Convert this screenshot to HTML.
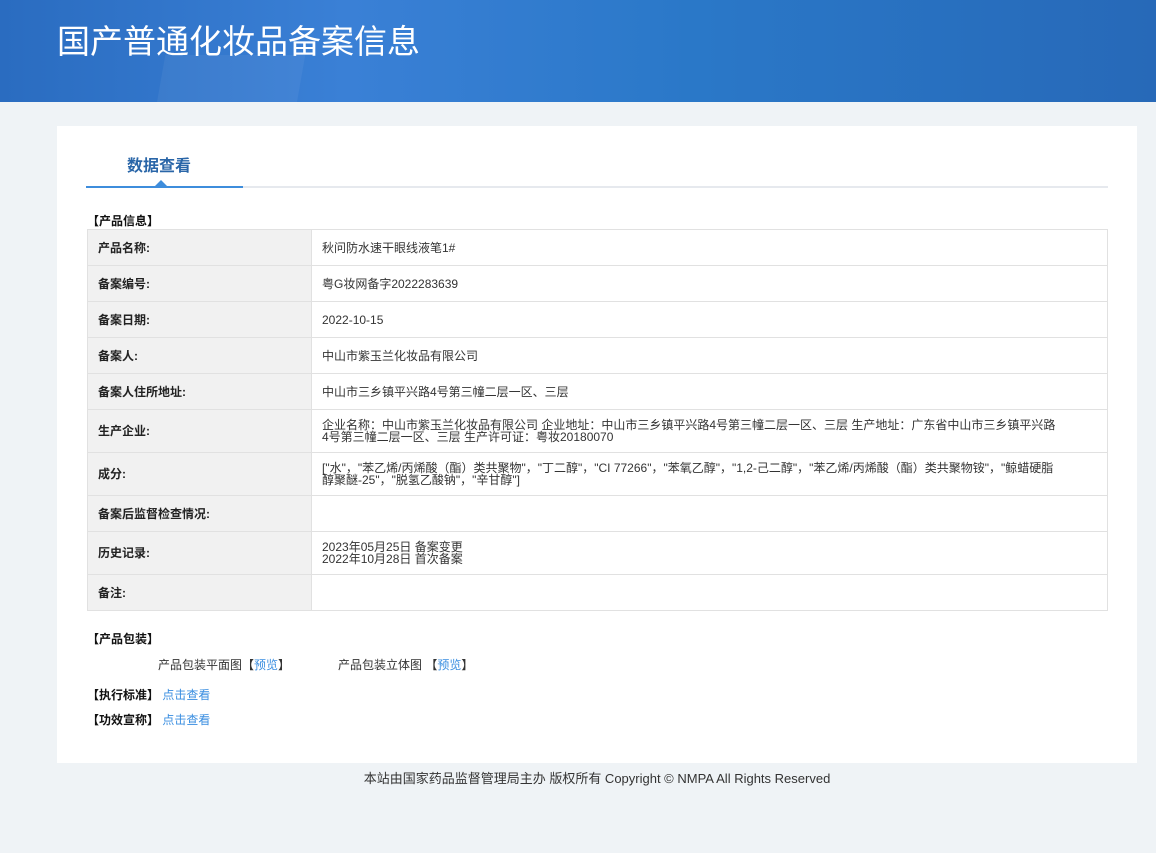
<!DOCTYPE html>
<html><head><meta charset="utf-8"><style>
*{margin:0;padding:0;box-sizing:border-box}
body{width:1156px;height:853px;background:#eff3f6;font-family:"Liberation Sans","Noto Sans CJK SC",sans-serif;font-size:12px;color:#333;position:relative;overflow:hidden}
.hd{position:absolute;left:0;top:0;width:1156px;height:102px;background:linear-gradient(90deg,#2a6cc0 0%,#3a80d6 30%,#2a78c8 60%,#2769b8 100%);overflow:hidden}
.hd h1{position:absolute;left:57px;top:15px;font-size:33px;font-weight:normal;color:#fff;font-family:"Noto Sans CJK SC",sans-serif}
.card{position:absolute;left:57px;top:126px;width:1080px;height:637px;background:#fff}
.tab{position:absolute;left:70px;top:26px;font-size:16px;font-weight:bold;color:#2a66a8;font-family:"Noto Sans CJK SC",sans-serif}
.line{position:absolute;left:29px;top:60px;width:1022px;height:2px;background:#e6e9ee}
.line2{position:absolute;left:29px;top:60px;width:157px;height:2px;background:#3e8ddc}
.tri{position:absolute;left:98px;top:54px;width:0;height:0;border-left:6px solid transparent;border-right:6px solid transparent;border-bottom:6px solid #3e8ddc}
.sec{position:absolute;font-weight:bold;color:#111;font-size:12px}
table{position:absolute;left:30px;top:103px;width:1021px;border-collapse:collapse;border:1px solid #9db8dc}
td{border:1px solid #e1e1e1;font-size:12px;vertical-align:middle;line-height:12px}
td.l{width:224px;background:#f1f1f1;font-weight:bold;padding-left:10px;color:#222}
td.v{padding-left:10px;color:#333}
a{color:#3a8ee0;text-decoration:none}
.ft{position:absolute;top:768px;left:0;width:1194px;text-align:center;font-size:13px;color:#333}
</style></head><body>
<div class="hd"><div style="position:absolute;left:160px;top:55px;width:140px;height:60px;background:rgba(255,255,255,0.05);transform:skewX(-10deg)"></div><h1>国产普通化妆品备案信息</h1></div>
<div class="card">
<div class="tab">数据查看</div>
<div class="line"></div><div class="line2"></div><div class="tri"></div>
<div class="sec" style="left:30px;top:86px">【产品信息】</div>
<table>
<tr style="height:36px"><td class="l">产品名称:</td><td class="v">秋问防水速干眼线液笔1#</td></tr>
<tr style="height:36px"><td class="l">备案编号:</td><td class="v">粤G妆网备字2022283639</td></tr>
<tr style="height:36px"><td class="l">备案日期:</td><td class="v">2022-10-15</td></tr>
<tr style="height:36px"><td class="l">备案人:</td><td class="v">中山市紫玉兰化妆品有限公司</td></tr>
<tr style="height:36px"><td class="l">备案人住所地址:</td><td class="v">中山市三乡镇平兴路4号第三幢二层一区、三层</td></tr>
<tr style="height:43px"><td class="l">生产企业:</td><td class="v" style="padding-right:50px">企业名称：中山市紫玉兰化妆品有限公司 企业地址：中山市三乡镇平兴路4号第三幢二层一区、三层 生产地址：广东省中山市三乡镇平兴路4号第三幢二层一区、三层 生产许可证：粤妆20180070</td></tr>
<tr style="height:43px"><td class="l">成分:</td><td class="v" style="padding-right:50px">["水"，"苯乙烯/丙烯酸（酯）类共聚物"，"丁二醇"，"CI 77266"，"苯氧乙醇"，"1,2-己二醇"，"苯乙烯/丙烯酸（酯）类共聚物铵"，"鲸蜡硬脂醇聚醚-25"，"脱氢乙酸钠"，"辛甘醇"]</td></tr>
<tr style="height:36px"><td class="l">备案后监督检查情况:</td><td class="v"></td></tr>
<tr style="height:43px"><td class="l">历史记录:</td><td class="v">2023年05月25日 备案变更<br>2022年10月28日 首次备案</td></tr>
<tr style="height:36px"><td class="l">备注:</td><td class="v"></td></tr>
</table>
<div class="sec" style="left:30px;top:504px">【产品包装】</div>
<div style="position:absolute;left:101px;top:530px">产品包装平面图【<a>预览</a>】</div>
<div style="position:absolute;left:281px;top:530px">产品包装立体图 【<a>预览</a>】</div>
<div class="sec" style="left:30px;top:560px">【执行标准】 <a style="font-weight:normal">点击查看</a></div>
<div class="sec" style="left:30px;top:585px">【功效宣称】 <a style="font-weight:normal">点击查看</a></div>
</div>
<div class="ft">本站由国家药品监督管理局主办 版权所有 Copyright © NMPA All Rights Reserved</div>
</body></html>
